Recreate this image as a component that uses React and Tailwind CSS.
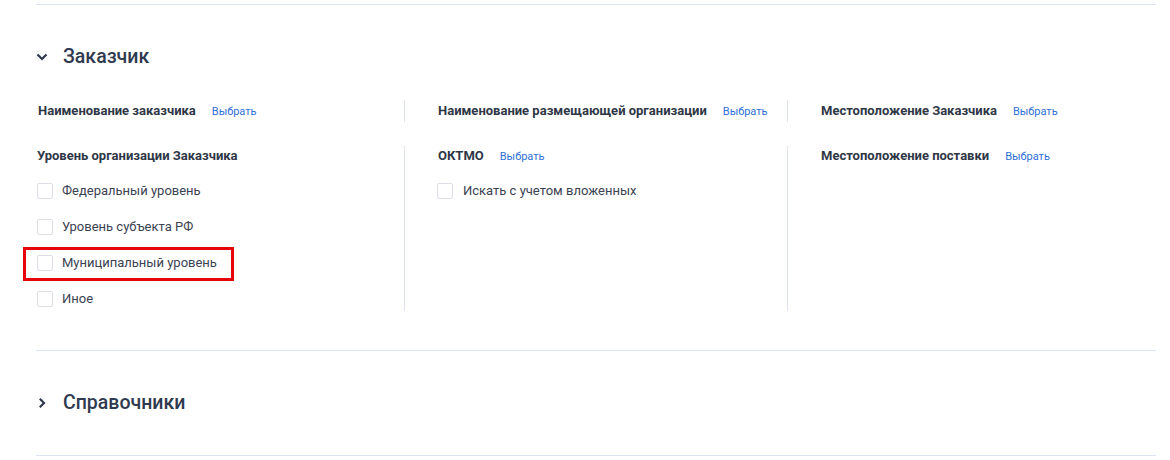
import { useState } from 'react'

// Filter panel: "Заказчик" section with three columns and a collapsed "Справочники" section
const font = { fontFamily: 'Roboto, "Noto Sans", Arial, sans-serif' }

function Chevron({ open }) {
  return (
    <svg width="12" height="12" viewBox="0 0 12 12" className="text-[#2f3a4f]">
      {open ? (
        <path d="M1.5 3.5 L6 8 L10.5 3.5" fill="none" stroke="currentColor" strokeWidth="2.2" />
      ) : (
        <path d="M3.8 1.8 L8 6 L3.8 10.2" fill="none" stroke="currentColor" strokeWidth="2.2" />
      )}
    </svg>
  )
}

function PickField({ label, tall = true }) {
  return (
    <div className={'flex items-center gap-4 ' + (tall ? 'h-[22px]' : 'h-5')}>
      <span className="text-[13px] font-bold text-[#2f3747]">{label}</span>
      <button className="text-[11px] text-[#2f6fd6] leading-none">Выбрать</button>
    </div>
  )
}

function Check({ label, highlight = false, gap = 'ml-[9px]' }) {
  const [checked, setChecked] = useState(false)
  return (
    <label className="relative flex items-center h-5 cursor-pointer">
      {highlight && (
        <span className="pointer-events-none absolute -left-[14px] -top-[6px] w-[211px] h-[34px] border-[3px] border-[#e4060b]" />
      )}
      <span
        onClick={() => setChecked(!checked)}
        className={
          'w-4 h-4 rounded-[2px] border ' +
          (checked ? 'bg-[#2f6fd6] border-[#2f6fd6]' : 'bg-white border-[#dcdfe5]')
        }
      />
      <span className={gap + ' text-[13px] text-[#3b4252]'}>{label}</span>
    </label>
  )
}

function SectionHeader({ title, open }) {
  return (
    <div className="flex items-center h-7">
      <span className="w-[27px] flex items-center">
        <Chevron open={open} />
      </span>
      <h2 className="text-[19.5px] font-medium text-[#2f3a4f]">{title}</h2>
    </div>
  )
}

export default function App() {
  const levels = ['Федеральный уровень', 'Уровень субъекта РФ', 'Муниципальный уровень', 'Иное']

  return (
    <div className="w-[1170px] h-[460px] bg-white overflow-hidden" style={font}>
      <div className="pt-1 pl-9 pr-[14px]">
        <div className="border-t border-[#d9e4f0]" />

        {/* Заказчик */}
        <div className="mt-[38px]">
          <SectionHeader title="Заказчик" open />
        </div>

        <div className="mt-[29px] flex">
          <div className="w-[368px] pl-[2px]">
            <PickField label="Наименование заказчика" />
          </div>
          <div className="w-[383px] border-l border-[#dfe4ea] pl-[33px]">
            <PickField label="Наименование размещающей организации" />
          </div>
          <div className="flex-1 border-l border-[#dfe4ea] pl-[33px]">
            <PickField label="Местоположение Заказчика" />
          </div>
        </div>

        <div className="mt-[24px] flex">
          <div className="w-[368px] pl-px pb-[2px]">
            <div className="h-5 flex items-center text-[13px] font-bold text-[#2f3747]">
              Уровень организации Заказчика
            </div>
            <div className="mt-[15px] flex flex-col gap-4">
              {levels.map((l) => (
                <Check key={l} label={l} highlight={l === 'Муниципальный уровень'} />
              ))}
            </div>
          </div>
          <div className="w-[383px] border-l border-[#dfe4ea] pl-[32px]">
            <div className="pl-px">
              <PickField label="ОКТМО" tall={false} />
            </div>
            <div className="mt-[15px]">
              <Check label="Искать с учетом вложенных" gap="ml-[10px]" />
            </div>
          </div>
          <div className="flex-1 border-l border-[#dfe4ea] pl-[33px]">
            <PickField label="Местоположение поставки" tall={false} />
          </div>
        </div>

        <div className="mt-[39px] border-t border-[#d9e4f0]" />

        {/* Справочники */}
        <div className="mt-[38px]">
          <SectionHeader title="Справочники" open={false} />
        </div>

        <div className="mt-[38px] border-t border-[#d9e4f0]" />
      </div>
    </div>
  )
}
